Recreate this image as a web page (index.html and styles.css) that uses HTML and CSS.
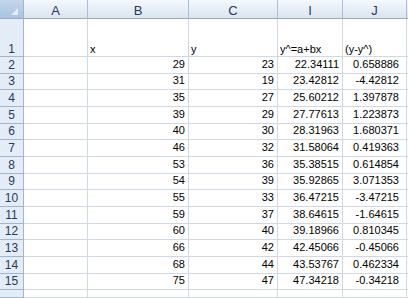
FILE: index.html
```html
<!DOCTYPE html>
<html>
    <head>
        <title>Regression sheet</title>
        <link rel="stylesheet" href="styles.css">
    </head>
    <body>
        <div class="sheet">
            <div class="row">
                <div class="corner"><span class="tri"></span></div>
                <div class="colhead">A</div>
                <div class="colhead">B</div>
                <div class="colhead">C</div>
                <div class="colhead">I</div>
                <div class="colhead">J</div>
                <div class="colhead"></div>
            </div>
            <div class="row first">
                <div class="rowhead">1</div>
                <div class="cell"></div>
                <div class="cell txt">x</div>
                <div class="cell txt">y</div>
                <div class="cell txt">y^=a+bx</div>
                <div class="cell txt">(y-y^)</div>
                <div class="cell"></div>
            </div>
            <div class="row"><div class="rowhead">2</div><div class="cell"></div><div class="cell">29</div><div class="cell">23</div><div class="cell">22.34111</div><div class="cell last">0.658886</div><div class="cell"></div></div>
            <div class="row"><div class="rowhead">3</div><div class="cell"></div><div class="cell">31</div><div class="cell">19</div><div class="cell">23.42812</div><div class="cell last">-4.42812</div><div class="cell"></div></div>
            <div class="row"><div class="rowhead">4</div><div class="cell"></div><div class="cell">35</div><div class="cell">27</div><div class="cell">25.60212</div><div class="cell last">1.397878</div><div class="cell"></div></div>
            <div class="row"><div class="rowhead">5</div><div class="cell"></div><div class="cell">39</div><div class="cell">29</div><div class="cell">27.77613</div><div class="cell last">1.223873</div><div class="cell"></div></div>
            <div class="row"><div class="rowhead">6</div><div class="cell"></div><div class="cell">40</div><div class="cell">30</div><div class="cell">28.31963</div><div class="cell last">1.680371</div><div class="cell"></div></div>
            <div class="row"><div class="rowhead">7</div><div class="cell"></div><div class="cell">46</div><div class="cell">32</div><div class="cell">31.58064</div><div class="cell last">0.419363</div><div class="cell"></div></div>
            <div class="row"><div class="rowhead">8</div><div class="cell"></div><div class="cell">53</div><div class="cell">36</div><div class="cell">35.38515</div><div class="cell last">0.614854</div><div class="cell"></div></div>
            <div class="row"><div class="rowhead">9</div><div class="cell"></div><div class="cell">54</div><div class="cell">39</div><div class="cell">35.92865</div><div class="cell last">3.071353</div><div class="cell"></div></div>
            <div class="row"><div class="rowhead">10</div><div class="cell"></div><div class="cell">55</div><div class="cell">33</div><div class="cell">36.47215</div><div class="cell last">-3.47215</div><div class="cell"></div></div>
            <div class="row"><div class="rowhead">11</div><div class="cell"></div><div class="cell">59</div><div class="cell">37</div><div class="cell">38.64615</div><div class="cell last">-1.64615</div><div class="cell"></div></div>
            <div class="row"><div class="rowhead">12</div><div class="cell"></div><div class="cell">60</div><div class="cell">40</div><div class="cell">39.18966</div><div class="cell last">0.810345</div><div class="cell"></div></div>
            <div class="row"><div class="rowhead">13</div><div class="cell"></div><div class="cell">66</div><div class="cell">42</div><div class="cell">42.45066</div><div class="cell last">-0.45066</div><div class="cell"></div></div>
            <div class="row"><div class="rowhead">14</div><div class="cell"></div><div class="cell">68</div><div class="cell">44</div><div class="cell">43.53767</div><div class="cell last">0.462334</div><div class="cell"></div></div>
            <div class="row"><div class="rowhead">15</div><div class="cell"></div><div class="cell">75</div><div class="cell">47</div><div class="cell">47.34218</div><div class="cell last">-0.34218</div><div class="cell"></div></div>
            <div class="row"><div class="rowhead"></div><div class="cell"></div><div class="cell"></div><div class="cell"></div><div class="cell"></div><div class="cell"></div><div class="cell"></div></div>
        </div>
    </body>
</html>
```

FILE: styles.css
```css
html, body {
	margin: 0;
	padding: 0;
	width: 408px;
	height: 298px;
	overflow: hidden;
	background: #ffffff;
}
.sheet {
	display: grid;
	grid-template-columns: 24px 64px 101px 89px 65px 64px 1fr;
	grid-template-rows: 19px 38px 17px 16px 17px 17px 16px 17px 17px 16px 17px 17px 16px 17px 17px 16px 1fr;
	width: 408px;
	height: 298px;
	font-family: "Liberation Sans", Arial, sans-serif;
}
.row {
	display: contents;
}
.corner {
	display: flex;
	justify-content: flex-end;
	align-items: flex-end;
	padding: 0 5px 3px 0;
	background: linear-gradient(#c3d6ec, #a9c3e2);
	border-right: 1px solid #9eb6ce;
	border-bottom: 1px solid #92a9c7;
	box-sizing: border-box;
}
.tri {
	width: 0;
	height: 0;
	border-left: 7px solid transparent;
	border-bottom: 7px solid #e3ecf7;
}
.colhead {
	display: flex;
	justify-content: center;
	align-items: flex-end;
	font-size: 13px;
	line-height: 15px;
	color: #243b5c;
	background: linear-gradient(#f5f8fc, #dbe4f0);
	border-right: 1px solid #a9bdd6;
	border-bottom: 1px solid #92a9c7;
	box-sizing: border-box;
}
.rowhead {
	display: flex;
	justify-content: center;
	align-items: flex-end;
	padding-bottom: 1px;
	font-size: 12px;
	line-height: 14px;
	color: #243b5c;
	background: #e4ecf7;
	border-right: 1px solid #9eb6ce;
	border-bottom: 1px solid #9eb6ce;
	box-sizing: border-box;
}
.cell {
	display: flex;
	justify-content: flex-end;
	align-items: flex-end;
	padding: 0 3px 2px 2px;
	font-size: 11px;
	line-height: 13px;
	color: #000000;
	white-space: nowrap;
	border-right: 1px solid #d0d7e5;
	border-bottom: 1px solid #d0d7e5;
	box-sizing: border-box;
}
.cell.last {
	padding-right: 7px;
}
.first .rowhead {
	padding-bottom: 0;
}
.first .cell {
	padding-bottom: 0;
}
.cell.txt {
	justify-content: flex-start;
}
```
